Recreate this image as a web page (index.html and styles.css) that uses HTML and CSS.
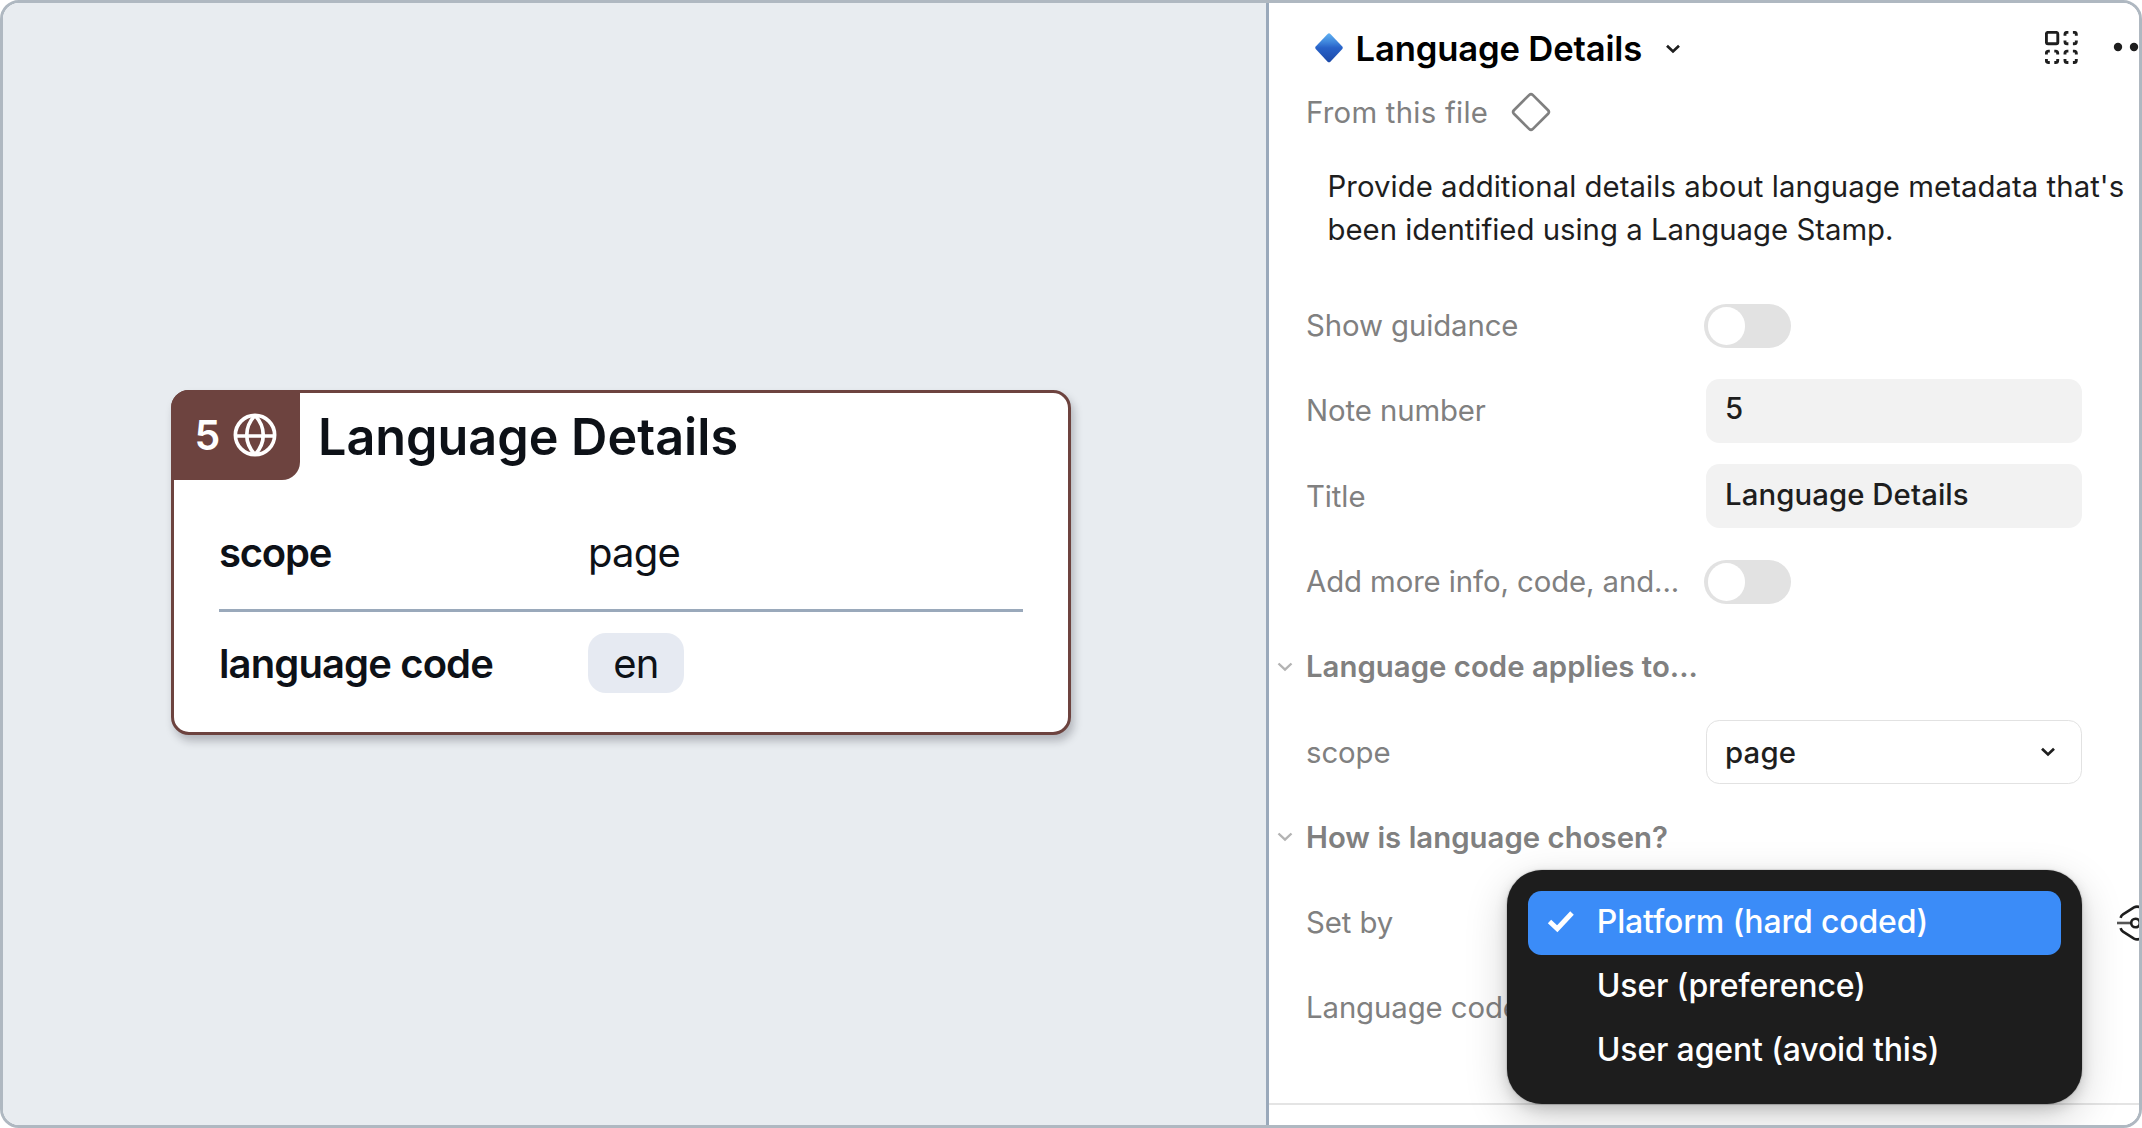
FILE: index.html
```
<!DOCTYPE html>
<html lang="en">
<head>
<meta charset="utf-8">
<title>Language Details</title>
<link rel="stylesheet" href="styles.css">
</head>
<body>
<div class="frame">
  <main class="canvas">
    <article class="card">
      <header class="card-head">
        <div class="badge">
          <span>5</span>
          <svg class="globe" viewBox="0 0 44 44" width="44" height="44" fill="none" stroke="#fff" stroke-width="3.7">
            <circle cx="22" cy="22" r="19.600"/>
            <path d="M22 2.4C11 14 11 30 22 41.600M22 2.400C33 14 33 30 22 41.600M2.400 23H41.600"/>
          </svg>
        </div>
        <h1 class="card-title">Language Details</h1>
      </header>
      <dl class="card-body">
        <div class="card-row">
          <dt class="tight">scope</dt>
          <dd>page</dd>
        </div>
        <div class="card-row">
          <dt>language code</dt>
          <dd><span class="pill">en</span></dd>
        </div>
      </dl>
    </article>
  </main>

  <aside class="panel">
    <header class="panel-head">
      <svg class="gem" viewBox="0 0 30 32" width="30" height="32">
        <defs>
          <linearGradient id="gem" x1="0" y1="0" x2="0" y2="1">
            <stop offset="0" stop-color="#5fb0f2"/>
            <stop offset=".3" stop-color="#3f86dc"/>
            <stop offset=".5" stop-color="#2862c8"/>
            <stop offset="1" stop-color="#1c49a8"/>
          </linearGradient>
        </defs>
        <path d="M13.600 1.900Q15 .6 16.400 1.900L28.300 14.500Q29.400 15.800 28.300 17L16.400 29.700Q15 31 13.600 29.700L1.700 17Q.6 15.800 1.700 14.500Z" fill="url(#gem)"/>
      </svg>
      <h2 class="panel-title">Language Details</h2>
      <svg class="caret" viewBox="0 0 16 10" width="16" height="10" fill="none" stroke="#1e1e1e" stroke-width="2.700"><path d="M2 1.700L8 7.400L14 1.700"/></svg>
      <svg class="grid-icon" viewBox="0 0 33 33" width="33" height="33" fill="none" stroke="#1e1e1e" stroke-width="2.900">
        <rect x="1.400" y="1.400" width="11.400" height="11.400" rx="1.600"/>
        <g id="dashed">
          <path d="M20 4.800V3.500Q20 1.400 22.100 1.400H23.400M27.900 1.400H29.200Q31.300 1.400 31.300 3.500V4.800M31.300 9.400V10.700Q31.300 12.800 29.200 12.800H27.900M23.400 12.800H22.100Q20 12.800 20 10.700V9.400"/>
        </g>
        <use href="#dashed" y="18.700"/>
        <use href="#dashed" x="-18.600" y="18.700"/>
      </svg>
      <svg class="more" viewBox="0 0 42 10" width="42" height="10" fill="#1e1e1e"><circle cx="5" cy="5" r="4.200"/><circle cx="21" cy="5" r="4.200"/><circle cx="37" cy="5" r="4.200"/></svg>
    </header>

    <div class="source">
      <span>From this file</span>
      <svg viewBox="0 0 40 40" width="40" height="40" fill="none" stroke="#808080" stroke-width="2.700"><path d="M18.300 2.900Q20 1.300 21.700 2.900L37.100 18.300Q38.700 20 37.100 21.700L21.700 37.100Q20 38.700 18.300 37.100L2.900 21.700Q1.300 20 2.900 18.300Z"/></svg>
    </div>

    <p class="description"><span class="first">Provide additional details about language metadata that's</span><br>been identified using a Language Stamp.</p>

    <div class="row">
      <label class="label">Show guidance</label>
      <span class="toggle"><i class="knob"></i></span>
    </div>
    <div class="row">
      <label class="label">Note number</label>
      <span class="input">5</span>
    </div>
    <div class="row">
      <label class="label">Title</label>
      <span class="input">Language Details</span>
    </div>
    <div class="row">
      <label class="label">Add more info, code, and...</label>
      <span class="toggle"><i class="knob"></i></span>
    </div>
    <div class="row section">
      <svg class="fold" viewBox="0 0 16 10" width="16" height="10" fill="none" stroke="#b3b3b3" stroke-width="2.400"><path d="M1.500 1.500L8 7.700L14.500 1.500"/></svg>
      <h3 class="section-title">Language code applies to...</h3>
    </div>
    <div class="row">
      <label class="label">scope</label>
      <span class="select">page
        <svg viewBox="0 0 16 10" width="16" height="10" fill="none" stroke="#1e1e1e" stroke-width="2.700"><path d="M2 1.700L8 7.400L14 1.700"/></svg>
      </span>
    </div>
    <div class="row section">
      <svg class="fold" viewBox="0 0 16 10" width="16" height="10" fill="none" stroke="#b3b3b3" stroke-width="2.400"><path d="M1.500 1.500L8 7.700L14.500 1.500"/></svg>
      <h3 class="section-title">How is language chosen?</h3>
    </div>
    <div class="row">
      <label class="label">Set by</label>
      <svg class="variable" viewBox="0 0 40 36" width="40" height="36" fill="none" stroke="#1e1e1e" stroke-width="2.600">
        <path d="M3.600 12.800Q4.200 10.500 6 9.400L17 2.400Q20 .8 23 2.400L34 9.400Q35.800 10.500 36.400 12.800M3.600 23.200Q4.200 25.500 6 26.600L17 33.600Q20 35.200 23 33.600L34 26.600Q35.800 25.500 36.400 23.200"/>
        <path d="M0 18H14" stroke="#555"/>
        <circle cx="18.500" cy="18" r="4.300"/>
      </svg>
      <div class="menu">
        <div class="option selected">
          <svg class="check" viewBox="0 0 28 22" width="28" height="22" fill="none" stroke="#fff" stroke-width="4.900"><path d="M2.500 10.500L10.300 17.700L25 2"/></svg>
          <span>Platform (hard coded)</span>
        </div>
        <div class="option"><span>User (preference)</span></div>
        <div class="option"><span>User agent (avoid this)</span></div>
      </div>
    </div>
    <div class="row">
      <label class="label">Language code</label>
    </div>
    <hr class="rule">
  </aside>
</div>
</body>
</html>
```
FILE: styles.css
```
* { box-sizing: border-box; margin: 0; padding: 0; }

body {
  width: 2142px;
  height: 1128px;
  overflow: hidden;
  background: #fff;
  font-family: Inter, "Liberation Sans", sans-serif;
}

svg { flex: none; display: block; }

.frame {
  display: flex;
  height: 1128px;
  border: 3px solid #afb8c1;
  border-radius: 19px;
  overflow: hidden;
}

/* Canvas with the annotation card */
.canvas {
  width: 1263px;
  padding: 387px 0 0 168px;
  background: #e8ecf0;
}

.card {
  width: 900px;
  height: 345px;
  border: 3px solid #6d433f;
  border-radius: 18px;
  background: #fff;
  color: #0d1117;
  box-shadow: 3px 6px 9px rgba(20, 20, 30, .25);
}

.card-head { display: flex; align-items: center; height: 87px; }

.badge {
  display: flex;
  align-items: center;
  gap: 14px;
  width: 129px;
  height: 90px;
  margin: -3px 0 0 -3px;
  padding-left: 23.500px;
  border-radius: 18px 0 18px 0;
  background: #6d433f;
  color: #fff;
  font-size: 41px;
  font-weight: 600;
}

.badge span { width: 24px; }

.card-title {
  margin-left: 18px;
  font-size: 50.300px;
  font-weight: 600;
  line-height: 60px;
}

.card-body { padding: 15px 45px 0; }

.card-row {
  display: flex;
  align-items: center;
  height: 102px;
  font-size: 40px;
  letter-spacing: -.02em;
}

.card-row:first-child {
  height: 117px;
  border-bottom: 3px solid #9aa9bb;
}

.card-row dt { width: 369px; font-weight: 600; letter-spacing: -.022em; }
.card-row .tight { letter-spacing: -.03em; }

.pill {
  display: flex;
  align-items: center;
  justify-content: center;
  width: 96px;
  height: 60px;
  border-radius: 18px;
  background: #e6eaf2;
}

/* Properties panel */
.panel {
  width: 873px;
  padding-left: 37px;
  border-left: 3px solid #9aa9bb;
  background: #fff;
  overflow: hidden;
  font-size: 29.330px;
  color: #1e1e1e;
}

.panel-head { display: flex; align-items: center; height: 89.400px; padding-left: 7.500px; }
.panel-title {
  flex: none;
  width: 298px;
  margin-left: 12px;
  color: #000;
  font-size: 34.670px;
  font-weight: 600;
  letter-spacing: -.005em;
  white-space: nowrap;
}
.caret { margin-left: 11px; margin-top: 2px; }
.grid-icon { margin-left: 364.500px; }
.more { margin-left: 35px; margin-top: -2px; }

.source {
  display: flex;
  align-items: center;
  gap: 23px;
  height: 37.400px;
  margin-top: 1px;
  color: #808080;
  letter-spacing: .009em;
}

.description {
  margin: 35.200px 0 31.400px 21.500px;
  line-height: 42.670px;
  white-space: nowrap;
}
.description .first { letter-spacing: .0018em; }

.row { position: relative; display: flex; align-items: center; height: 85.333px; }

.label { width: 400px; flex: none; color: #808080; letter-spacing: -.003em; white-space: nowrap; }

.section { margin-left: -29px; gap: 13px; }
.section-title { color: #808080; font-size: 29.330px; font-weight: 600; letter-spacing: .001em; }

.toggle {
  display: flex;
  align-items: center;
  width: 87px;
  height: 44.600px;
  margin: 1.500px 0 0 -1.700px;
  padding-left: 3.500px;
  border-radius: 23px;
  background: #e2e2e2;
}
.knob { width: 37.500px; height: 37.500px; border-radius: 50%; background: #fff; }

.input, .select {
  display: flex;
  align-items: center;
  width: 376.300px;
  height: 64px;
  padding-left: 19px;
  border-radius: 13.300px;
}
.input { padding-bottom: 4px; background: #f2f2f2; font-weight: 450; letter-spacing: .003em; }
.select {
  justify-content: space-between;
  padding: 0 25px 0 18px;
  border: 1.500px solid #e2e2e2;
  font-weight: 500;
  letter-spacing: .007em;
}

.variable { margin-left: 411px; }

.rule { height: 2px; margin: 52.700px 0 0 -37px; border: 0; background: #e4e4e4; }

/* Open dropdown over the "Set by" row */
.menu {
  position: absolute;
  z-index: 1;
  left: 201px;
  top: -10.500px;
  width: 575.300px;
  padding: 21.300px 21.300px 21.200px;
  border-radius: 35px;
  background: #1d1d1d;
  color: #fff;
  font-size: 32px;
  letter-spacing: -.005em;
  box-shadow: 0 0 1.500px rgba(0, 0, 0, .5), 0 5px 13px rgba(0, 0, 0, .15), 0 13px 43px rgba(0, 0, 0, .18);
}
.option {
  display: flex;
  align-items: center;
  gap: 21.500px;
  height: 64px;
  padding: 0 0 2px 68.500px;
  border-radius: 13.300px;
  font-weight: 500;
}
.option.selected { padding-left: 19px; background: #3b8cf8; }
```
